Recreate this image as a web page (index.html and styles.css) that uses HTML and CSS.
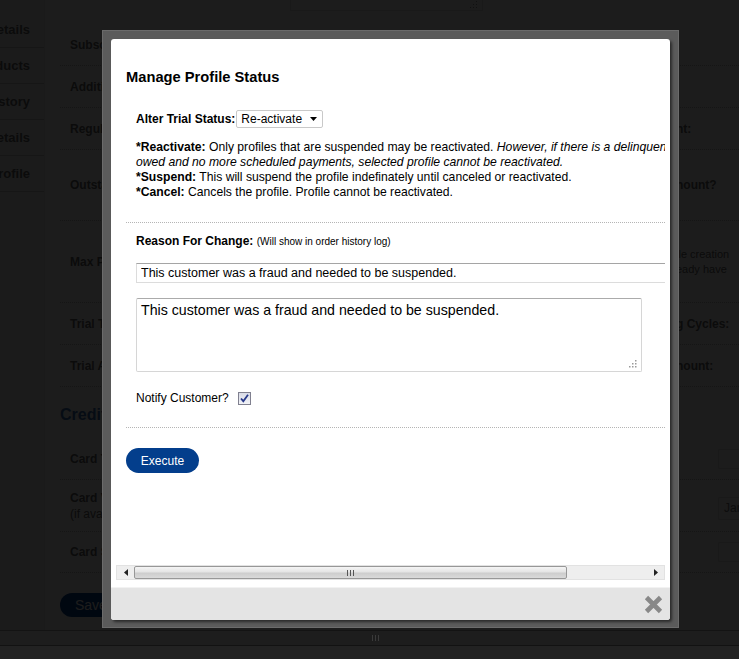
FILE: index.html
```html
<!DOCTYPE html>
<html lang="en">
<head>
<meta charset="utf-8">
<title>Manage Profile Status</title>
<link rel="stylesheet" href="styles.css">
</head>
<body>
<div class="page">
  <div class="layout">
    <nav class="sidebar">
      <div class="side-item"><span>Billing Details</span></div>
      <div class="side-item"><span>Products</span></div>
      <div class="side-item"><span>Order History</span></div>
      <div class="side-item"><span>Payment Details</span></div>
      <div class="side-item"><span>Edit Profile</span></div>
    </nav>
    <main class="main">
      <div class="top-row">
        <div class="notes-box">
          <svg class="notes-grip" width="8" height="8" viewBox="0 0 8 8"><rect x="6" y="0" width="1" height="1"/><rect x="3" y="3" width="1" height="1"/><rect x="6" y="3" width="1" height="1"/><rect x="0" y="6" width="1" height="1"/><rect x="3" y="6" width="1" height="1"/><rect x="6" y="6" width="1" height="1"/></svg>
        </div>
      </div>
      <div class="row h41"><span class="lbl">Subscription Name:</span><span></span><span></span></div>
      <div class="row h42"><span class="lbl">Additional Products:</span><span></span><span></span></div>
      <div class="row h42"><span class="lbl">Regular Payment:</span><span class="note">nt:</span><span></span></div>
      <div class="row h71"><span class="lbl">Outstanding Balance:</span><span class="note">nount?</span><span></span></div>
      <div class="row h82"><span class="lbl">Max Payments:</span><span class="note small">ile creation<br>eady have</span><span></span></div>
      <div class="row h42"><span class="lbl">Trial Term:</span><span class="note">g Cycles:</span><span></span></div>
      <div class="row h42"><span class="lbl">Trial Amount:</span><span class="note">nount:</span><span></span></div>
      <h3 class="credit-heading">Credit Card</h3>
      <div class="row h42"><span class="lbl">Card Type:</span><span></span><span class="ghost-input"></span></div>
      <div class="row h52"><span class="lbl">Card Valid From:<br><span class="lbl-sub">(if available)</span></span><span></span><span class="ghost-input tall">Jan</span></div>
      <div class="row h41"><span class="lbl">Card Security Code:</span><span></span><span class="ghost-input"></span></div>
      <div class="save-btn">Save</div>
    </main>
    <div class="dim"></div>
  </div>
  <div class="page-hscroll">
    <svg class="page-grip" width="8" height="6" viewBox="0 0 8 6"><rect x="0" y="0" width="1" height="6"/><rect x="3" y="0" width="1" height="6"/><rect x="6" y="0" width="1" height="6"/></svg>
  </div>
  <div class="page-foot"></div>
</div>

<div class="modal-frame">
  <div class="modal">
    <div class="viewport">
      <div class="content">
        <h2 class="title">Manage Profile Status</h2>
        <div class="section">
          <div class="status-row">
            <span>Alter Trial Status:</span>
            <div class="select"><span>Re-activate</span><svg width="7" height="4" viewBox="0 0 7 4"><path d="M0 0H7L3.5 4Z" fill="#000"/></svg></div>
          </div>
          <p class="help"><b>*Reactivate:</b> Only profiles that are suspended may be reactivated. <i>However, if there is a delinquent amount owed and no more scheduled payments, selected profile cannot be reactivated.</i><br><b>*Suspend:</b> This will suspend the profile indefinately until canceled or reactivated.<br><b>*Cancel:</b> Cancels the profile. Profile cannot be reactivated.</p>
        </div>
        <div class="sep"></div>
        <div class="section">
          <div class="reason"><b>Reason For Change:</b> <small>(Will show in order history log)</small></div>
          <input class="text-input" type="text" value="This customer was a fraud and needed to be suspended.">
          <div class="ta-wrap">
            <textarea class="ta">This customer was a fraud and needed to be suspended.</textarea>
            <svg class="ta-grip" width="8" height="8" viewBox="0 0 8 8"><rect x="6" y="0" width="1.5" height="1.5"/><rect x="3" y="3" width="1.5" height="1.5"/><rect x="6" y="3" width="1.5" height="1.5"/><rect x="0" y="6" width="1.5" height="1.5"/><rect x="3" y="6" width="1.5" height="1.5"/><rect x="6" y="6" width="1.5" height="1.5"/></svg>
          </div>
          <label class="notify">Notify Customer?
            <span class="check"><svg width="11" height="11" viewBox="0 0 11 11"><path d="M2 5.5L4.3 8.2L9 1.8" fill="none" stroke="#27388a" stroke-width="1.8"/></svg></span>
          </label>
        </div>
        <div class="sep sep2"></div>
        <button class="execute" type="button">Execute</button>
      </div>
    </div>
    <div class="hscroll">
      <div class="hs-arrow"><svg width="4" height="7" viewBox="0 0 4 7"><path d="M4 0V7L0 3.5Z" fill="#222"/></svg></div>
      <div class="hs-track">
        <div class="hs-thumb"><svg width="8" height="6" viewBox="0 0 8 6"><rect x="0" y="0" width="1" height="6"/><rect x="3" y="0" width="1" height="6"/><rect x="6" y="0" width="1" height="6"/></svg></div>
      </div>
      <div class="hs-arrow"><svg width="4" height="7" viewBox="0 0 4 7"><path d="M0 0V7L4 3.5Z" fill="#222"/></svg></div>
    </div>
    <div class="modal-foot">
      <svg class="close" width="19" height="19" viewBox="0 0 19 19"><path d="M2.5 2.5L16.5 16.5M16.5 2.5L2.5 16.5" stroke="#888" stroke-width="4.6" fill="none"/></svg>
    </div>
  </div>
</div>
</body>
</html>
```
FILE: styles.css
```css
* { box-sizing: border-box; }
html, body { margin: 0; }
body {
  width: 739px;
  height: 659px;
  overflow: hidden;
  position: relative;
  background: #1b1b1b;
  font-family: "Liberation Sans", Arial, sans-serif;
}

/* background page, dimmed by the overlay */
.page { display: flex; flex-direction: column; height: 659px; }
.layout {
  position: relative;
  display: flex;
  height: 630px;
  overflow: hidden;
  flex: none;
  background: #fff;
}
.sidebar { width: 45px; flex: none; border-right: 1px solid #e6e6e6; padding-top: 12px; background: #f7f7f7; }
.side-item {
  height: 36px;
  display: flex;
  align-items: center;
  justify-content: flex-end;
  padding-right: 14px;
  border-bottom: 1px solid #c8c8c8;
  overflow: hidden;
  white-space: nowrap;
  font-weight: bold;
  font-size: 13px;
  color: #666;
}
.side-item span { flex: none; }
.main { flex: 1; margin-left: 15px; min-width: 0; }
.top-row { height: 25px; padding-left: 230px; }
.notes-box {
  width: 193px;
  height: 11px;
  border: 1px solid #ddd;
  border-top: none;
  position: relative;
}
.notes-grip { position: absolute; right: 4px; bottom: 1px; fill: #999; }
.row {
  display: grid;
  grid-template-columns: 616px 42px 1fr;
  align-items: center;
  border-bottom: 1px dotted #bbb;
}
.h41 { height: 41px; }
.h42 { height: 42px; }
.h52 { height: 52px; }
.h71 { height: 71px; }
.h82 { height: 82px; }
.lbl {
  padding-left: 10px;
  font-weight: bold;
  font-size: 12px;
  line-height: 16px;
  color: #666;
  white-space: nowrap;
}
.lbl-sub { font-weight: normal; }
.note {
  font-weight: bold;
  font-size: 12px;
  color: #666;
  white-space: nowrap;
}
.note.small { font-weight: normal; font-size: 11px; line-height: 15px; }
.ghost-input {
  height: 20px;
  border: 1px solid #ddd;
  border-right: none;
  border-radius: 2px 0 0 2px;
  font-size: 12px;
  line-height: 18px;
  color: #777;
  padding-left: 5px;
}
.ghost-input.tall { height: 23px; line-height: 21px; align-self: end; margin-bottom: 11px; }
.credit-heading {
  height: 51px;
  margin: 0;
  padding-top: 19px;
  font-size: 16px;
  line-height: 18px;
  font-weight: bold;
  color: #3a6cb4;
}
.save-btn {
  margin-top: 20px;
  width: 80px;
  height: 24px;
  border-radius: 12px;
  background: #063f8f;
  color: #fff;
  font-size: 14px;
  line-height: 24px;
  padding-left: 15px;
}
.dim {
  position: absolute;
  inset: 0;
  background: rgba(0, 0, 0, 0.89);
}
.page-hscroll {
  height: 15px;
  flex: none;
  background: #1d1d1d;
  border-top: 1px solid #131313;
  padding: 4px 0 0 372px;
  fill: #3a3a3a;
}
.page-grip { display: block; }
.page-foot { flex: 1; background: #222; border-top: 1px solid #121212; }

/* modal */
.modal-frame {
  position: absolute;
  left: 102px;
  top: 30px;
  width: 577px;
  height: 598px;
  padding: 8px 8px 7px;
  background: #5b5b5b;
  border: 1px solid #6b6b6b;
}
.modal {
  height: 100%;
  background: #fff;
  border-radius: 3px;
  display: flex;
  flex-direction: column;
  overflow: hidden;
  box-shadow: 2px 2px 3px rgba(0, 0, 0, 0.55);
}
.viewport { margin: 5px 5px 0; height: 521px; overflow: hidden; flex: none; }
.content { width: 653px; padding: 0 10px; color: #000; }
.title { margin: 25px 0 0; font-size: 14.7px; line-height: 17px; font-weight: bold; }
.section { padding-left: 10px; }
.status-row {
  margin-top: 24px;
  display: flex;
  align-items: center;
  gap: 1px;
  font-size: 12px;
  font-weight: bold;
}
.select {
  width: 87px;
  height: 18px;
  border: 1px solid #c9c9c9;
  border-radius: 2px;
  display: flex;
  align-items: center;
  justify-content: space-between;
  padding: 0 5px 0 4px;
  font-weight: normal;
  font-size: 12px;
}
.help { margin: 12px 0 0; width: 592px; font-size: 12.17px; line-height: 15px; }
.sep { margin-top: 22px; border-top: 1px dotted #b5b5b5; }
.reason { margin-top: 11px; font-size: 12px; line-height: 15px; }
.reason small { font-size: 10px; }
.text-input {
  display: block;
  margin-top: 14px;
  width: 600px;
  height: 20px;
  border: 1px solid #dcdcdc;
  border-top-color: #a5a5a5;
  padding: 0 4px;
  font: 12.5px "Liberation Sans", Arial, sans-serif;
  color: #000;
  outline: none;
}
.ta-wrap { position: relative; margin-top: 15px; width: 506px; }
.ta {
  display: block;
  width: 506px;
  height: 74px;
  border: 1px solid #d6d6d6;
  border-top-color: #ababab;
  border-radius: 2px;
  padding: 3px 4px;
  resize: none;
  font: 14.2px/17px "Liberation Sans", Arial, sans-serif;
  color: #000;
  outline: none;
}
.ta-grip { position: absolute; right: 5px; bottom: 4px; fill: #9a9a9a; }
.notify {
  margin-top: 19px;
  display: flex;
  align-items: center;
  gap: 9px;
  font-size: 12px;
  line-height: 15px;
}
.check {
  width: 13px;
  height: 13px;
  border: 1px solid #80808f;
  background: linear-gradient(#d8dbe6, #f2f3f7);
  display: flex;
  align-items: center;
  justify-content: center;
}
.sep2 { margin-top: 21px; }
.execute {
  display: block;
  margin-top: 20px;
  width: 73px;
  height: 25px;
  border: none;
  border-radius: 13px;
  background: #033e8c;
  color: #fff;
  font: 12px "Liberation Sans", Arial, sans-serif;
  padding: 0;
}
.hscroll {
  margin: 0 5px;
  height: 15px;
  flex: none;
  display: flex;
  background: #eeeeee;
  border: 1px solid #e2e2e2;
}
.hs-arrow { width: 17px; display: flex; align-items: center; justify-content: center; }
.hs-track { flex: 1; }
.hs-thumb {
  width: 433px;
  height: 100%;
  border: 1px solid #979797;
  border-radius: 2px;
  background: linear-gradient(#f5f5f5, #e4e4e4 45%, #cdcdcd 55%, #d9d9d9);
  display: flex;
  align-items: center;
  justify-content: center;
  fill: #555;
}
.modal-foot {
  margin-top: 7px;
  flex: 1;
  background: #e4e4e4;
  border-top: 1px solid #f2f2f2;
  display: flex;
  justify-content: flex-end;
  align-items: center;
  padding-right: 7px;
}
```
